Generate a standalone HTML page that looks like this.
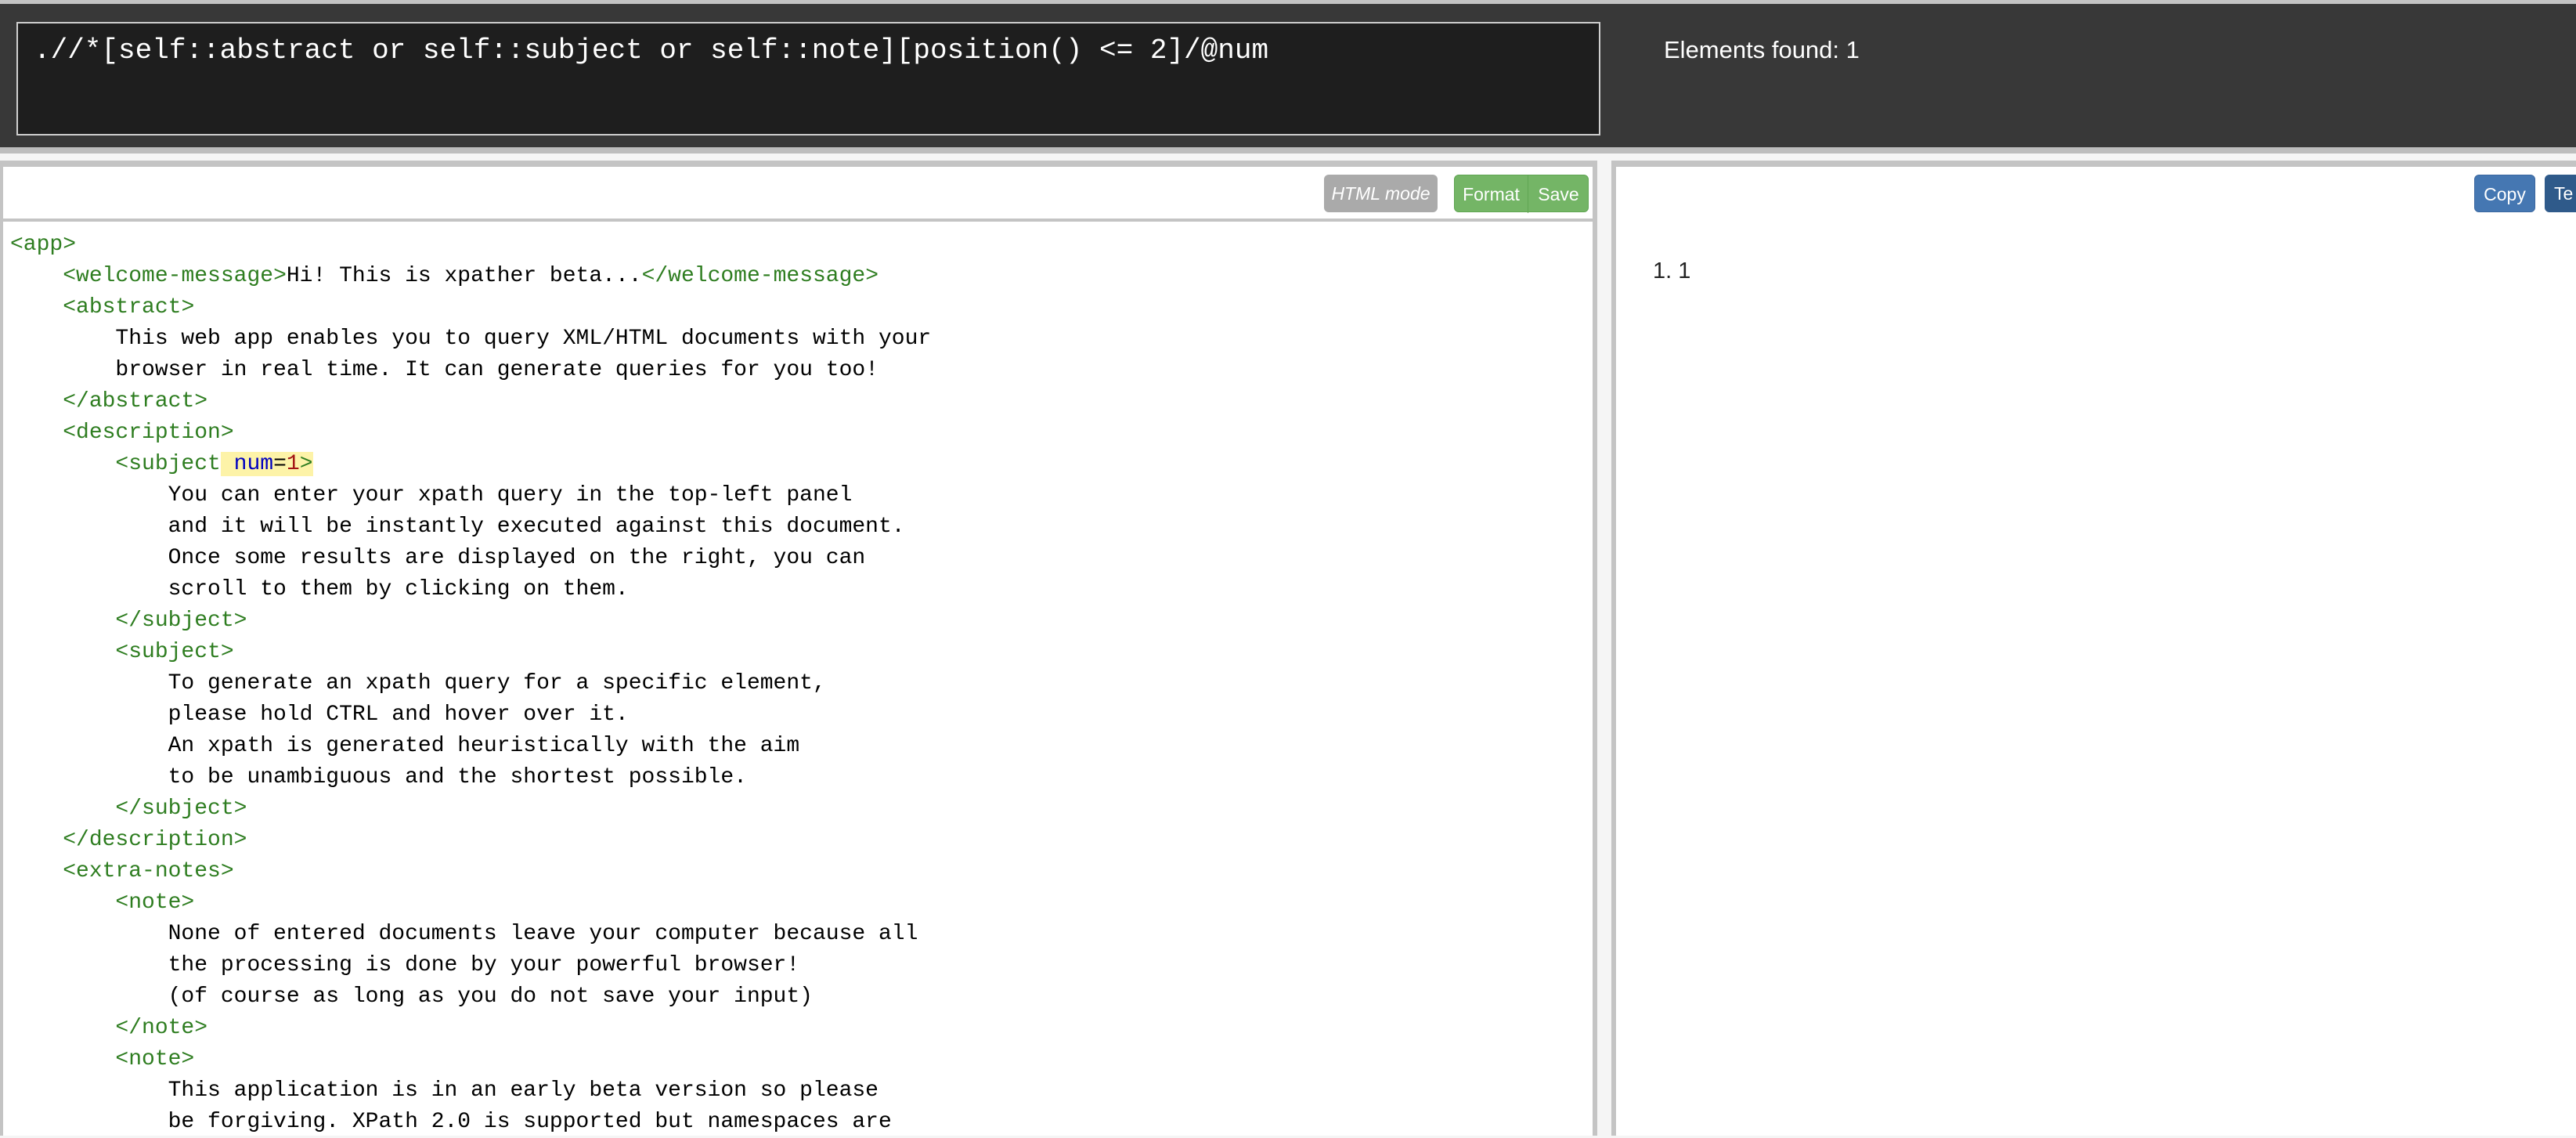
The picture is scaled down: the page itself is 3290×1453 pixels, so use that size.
<!DOCTYPE html>
<html><head><meta charset="utf-8"><style>
*{box-sizing:border-box;margin:0;padding:0}
body{width:3290px;height:1450px;overflow:hidden;background:#f5f5f5;font-family:"Liberation Sans",sans-serif;position:relative}
#top{position:absolute;left:0;top:0;width:3290px;height:196px;background:#383838;border-top:5px solid #c4c4c4;border-bottom:8px solid #bdbdbd}
#ta{position:absolute;left:21px;top:23px;width:2023px;height:145px;background:#1e1e1e;border:2px solid #cfcfcf;color:#fff;font-family:"Liberation Mono",monospace;font-size:36px;padding:14px 0 0 20px;white-space:pre;letter-spacing:0}
#found{position:absolute;left:2125px;top:41px;color:#fff;font-size:31px}
.panel{position:absolute;top:205px;height:1245px;background:#fff;border-top:8px solid #c4c4c4}
#left{left:0;width:2040px;border-right:6px solid #c4c4c4;border-left:4px solid #c4c4c4}
#right{left:2058px;width:1232px;border-left:6px solid #c4c4c4}
#tb{position:absolute;left:0;top:0;width:100%;height:70px;border-bottom:4px solid #c4c4c4}
.btn{position:absolute;top:10px;height:48px;color:#fff;font-size:23px;line-height:48px;border-radius:6px;text-align:center}
#code{position:absolute;left:9px;top:80px;font-family:"Liberation Mono",monospace;font-size:28px;line-height:40px;white-space:pre;color:#000}
.t{color:#2e7d20}.a{color:#0000c0}.v{color:#a31515}.h{background:#fdf3a8}
</style></head><body>
<div id="top"><div id="ta">.//*[self::abstract or self::subject or self::note][position() &lt;= 2]/@num</div><div id="found">Elements found: 1</div></div>
<div class="panel" id="left">
<div id="tb">
<div class="btn" style="left:1687px;width:145px;background:#aaa;font-style:italic">HTML mode</div>
<div class="btn" style="left:1853px;width:172px;background:#74b566;border:1px solid #5fa552"><span style="position:absolute;left:0;width:94px;border-right:1px solid #5fa552">Format</span><span style="position:absolute;left:94px;width:77px">Save</span></div>
</div>
<div id="code"><span class="t">&lt;app&gt;</span>
    <span class="t">&lt;welcome-message&gt;</span>Hi! This is xpather beta...<span class="t">&lt;/welcome-message&gt;</span>
    <span class="t">&lt;abstract&gt;</span>
        This web app enables you to query XML/HTML documents with your
        browser in real time. It can generate queries for you too!
    <span class="t">&lt;/abstract&gt;</span>
    <span class="t">&lt;description&gt;</span>
        <span class="t">&lt;subject</span><span class="h"> <span class="a">num</span>=<span class="v">1</span><span class="t">&gt;</span></span>
            You can enter your xpath query in the top-left panel
            and it will be instantly executed against this document.
            Once some results are displayed on the right, you can
            scroll to them by clicking on them.
        <span class="t">&lt;/subject&gt;</span>
        <span class="t">&lt;subject&gt;</span>
            To generate an xpath query for a specific element,
            please hold CTRL and hover over it.
            An xpath is generated heuristically with the aim
            to be unambiguous and the shortest possible.
        <span class="t">&lt;/subject&gt;</span>
    <span class="t">&lt;/description&gt;</span>
    <span class="t">&lt;extra-notes&gt;</span>
        <span class="t">&lt;note&gt;</span>
            None of entered documents leave your computer because all
            the processing is done by your powerful browser!
            (of course as long as you do not save your input)
        <span class="t">&lt;/note&gt;</span>
        <span class="t">&lt;note&gt;</span>
            This application is in an early beta version so please
            be forgiving. XPath 2.0 is supported but namespaces are</div>
</div>
<div class="panel" id="right">
<div class="btn" style="left:1096px;width:78px;background:#4577b2;border:1px solid #3a67a0">Copy</div>
<div class="btn" style="left:1186px;width:60px;background:#2f5a8a;text-align:left;padding-left:12px">Te</div>
<div style="position:absolute;left:47px;top:117px;font-size:29px;color:#222">1. 1</div>
</div>
</body></html>
